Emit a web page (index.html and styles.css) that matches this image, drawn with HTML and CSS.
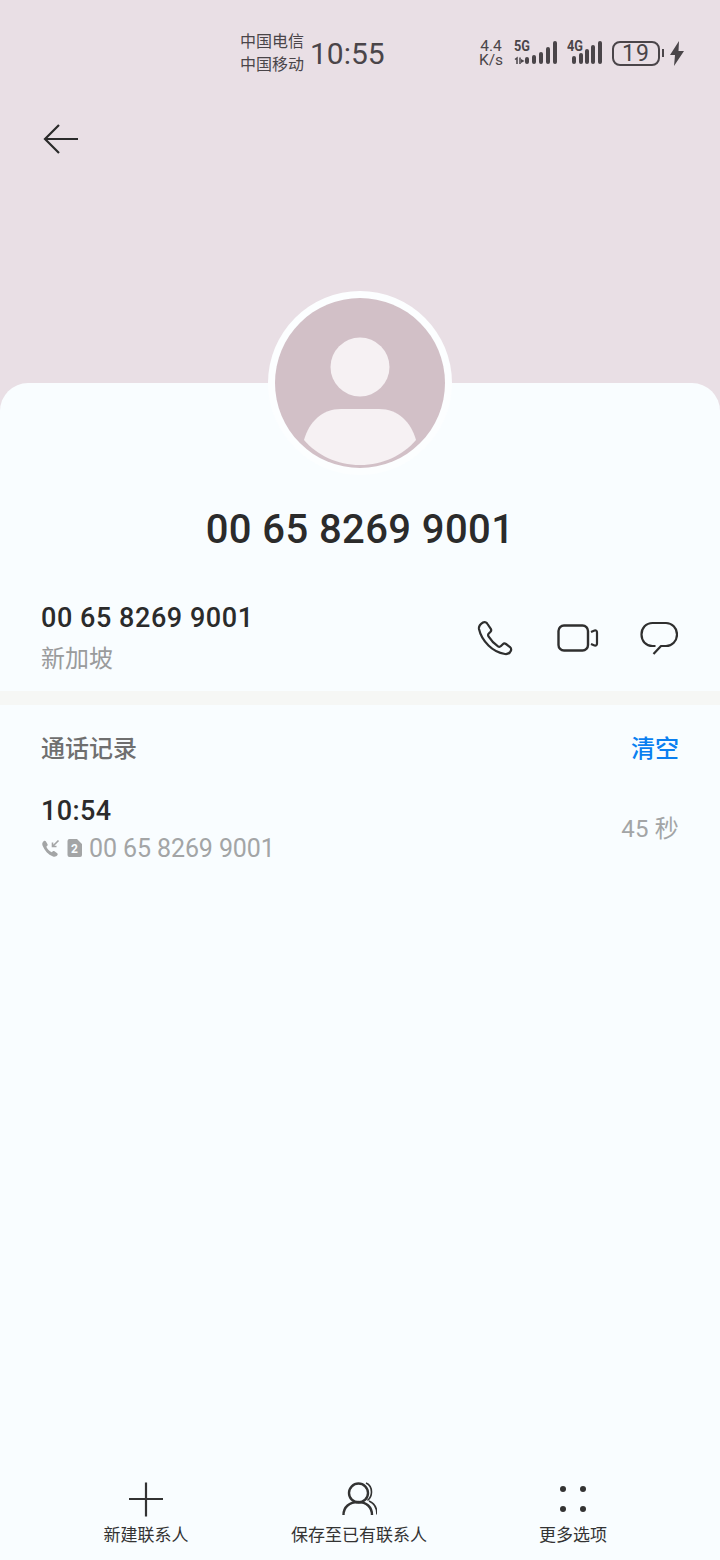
FILE: index.html
```html
<!DOCTYPE html>
<html lang="zh-CN">
<head>
  <meta charset="UTF-8" />
  <meta name="viewport" content="width=device-width, initial-scale=1.0"/>
  <title>通话详情</title>
  <link rel="stylesheet" href="styles.css">
</head>
<body>
  <header class="top">
    <div class="status">
      <div class="carriers">
        <span>中国电信</span>
        <span>中国移动</span>
      </div>
      <div class="clock">10:55</div>
      <div class="speed">
        <span>4.4</span>
        <span>K/s</span>
      </div>
      <div class="signal">
        <span class="net">5G</span>
        <svg class="bars" width="44" height="24" viewBox="0 0 44 24">
          <path d="M1 19.500l2-1.500v6M6 17.500v6.500" fill="none" stroke="#4a4549" stroke-width="1.500"/>
          <path d="M7 19l3.500 2-3.500 2z" fill="#4a4549"/>
          <rect x="11" y="17" width="4" height="7" rx="2" fill="#4a4549"/>
          <rect x="18" y="15" width="4" height="9" rx="2" fill="#4a4549"/>
          <rect x="25" y="12" width="4" height="12" rx="2" fill="#4a4549"/>
          <rect x="32" y="7" width="4" height="17" rx="2" fill="#4a4549"/>
          <rect x="39" y="1" width="4" height="23" rx="2" fill="#4a4549"/>
        </svg>
      </div>
      <div class="signal signal-4g">
        <span class="net">4G</span>
        <svg class="bars" width="36" height="24" viewBox="0 0 36 24">
          <rect x="5" y="16" width="4" height="8" rx="2" fill="#4a4549"/>
          <rect x="12" y="13" width="4" height="11" rx="2" fill="#4a4549"/>
          <rect x="18" y="9" width="4" height="15" rx="2" fill="#4a4549"/>
          <rect x="24" y="5" width="4" height="19" rx="2" fill="#4a4549"/>
          <rect x="31" y="1" width="4" height="23" rx="2" fill="#4a4549"/>
        </svg>
      </div>
      <div class="battery">19</div>
      <div class="battery-tip"></div>
      <svg class="bolt" width="14" height="25" viewBox="0 0 14 25">
        <path d="M9 0L0 14h5l-1 11 10-15H8.500z" fill="#4a4549"/>
      </svg>
    </div>
    <button class="back">
      <svg width="36" height="32" viewBox="0 0 36 32">
        <path d="M35 16H2M16 2L2 16l14 14" fill="none" stroke="#2b2b2b" stroke-width="2.200"/>
      </svg>
    </button>
  </header>

  <main class="card">
    <div class="avatar">
      <svg width="170" height="170" viewBox="0 0 170 170">
        <circle cx="85" cy="85" r="85" fill="#d2c0c7"/>
        <circle cx="85" cy="69" r="29.500" fill="#f6f1f3"/>
        <path d="M29 142C34 124 47 111 66 111h38c19 0 32 13 37 31-13 15-33 25-56 25s-43-10-56-25z" fill="#f6f1f3"/>
      </svg>
    </div>

    <h1 class="title">00 65 8269 9001</h1>

    <section class="number-row">
      <div>
        <div class="number">00 65 8269 9001</div>
        <div class="region">新加坡</div>
      </div>
      <div class="actions">
        <svg class="icon-phone" width="36" height="36" viewBox="0 0 36 36">
          <path d="M6 2.500C3.500 4 1.500 6 2 9c1.500 7 5 12 9.500 16.500S22 33 28 34c2.500.3 5-1 6-3.500.5-1.500 0-2.500-1-3.500l-4-3c-1-.7-2.300-.7-3.200.2l-1.800 1.800c-1 1-2 1-3 .3-4-2.800-7-6-9.500-10-.6-1-.5-2 .3-2.800l1.700-1.700c.8-.9.9-2 .3-3L10.500 4C9.500 2.300 7.500 1.600 6 2.500z" fill="none" stroke="#2f2f2f" stroke-width="2.200"/>
        </svg>
        <svg class="icon-video" width="42" height="28" viewBox="0 0 42 28">
          <rect x="1.500" y="1.500" width="29.500" height="25" rx="5.500" fill="none" stroke="#2f2f2f" stroke-width="2.400"/>
          <path d="M34 8l3.500-1.500Q40 6 40 8.500v11q0 2.500-2.500 2L34 20" fill="none" stroke="#2f2f2f" stroke-width="2.200"/>
        </svg>
        <svg class="icon-chat" width="38" height="34" viewBox="0 0 38 34">
          <path d="M15.500 25h-3C6 25 1.500 20 1.500 13.500S6 2 12.500 2H26c6 0 11 5 11 11.500S32 25 26 25h-5l-7.500 8" fill="none" stroke="#2f2f2f" stroke-width="2.200" stroke-linejoin="round"/>
        </svg>
      </div>
    </section>

    <div class="divider"></div>

    <section class="log">
      <div class="log-head">
        <span class="log-title">通话记录</span>
        <span class="log-clear">清空</span>
      </div>
      <div class="log-item">
        <div>
          <div class="log-time">10:54</div>
          <div class="log-sub">
            <svg width="19" height="19" viewBox="0 0 19 19">
              <path d="M3 2C1.500 3 .8 4.500 1.500 6.500c2 5 5.500 9 10.500 11 1.800.6 3.500 0 4.500-1.500.4-.7.300-1.300-.3-1.800l-2.700-2c-.6-.4-1.200-.4-1.700.1l-1 1c-2.500-1.200-4.300-3-5.500-5.500l1-1c.5-.5.5-1.200.1-1.700L4.800 2.300C4.300 1.700 3.600 1.600 3 2z" fill="#a3a5a6"/>
              <path d="M17.500 1.500L11.500 7.500M11.500 3.500v4h4" fill="none" stroke="#a3a5a6" stroke-width="1.600"/>
            </svg>
            <svg class="sim" width="15" height="18" viewBox="0 0 15 18">
              <path d="M2.500 0H10l5 5v11a2 2 0 0 1-2 2H2.500a2 2 0 0 1-2-2V2a2 2 0 0 1 2-2z" fill="#a3a5a6"/>
              <text x="7.500" y="14" text-anchor="middle" class="sim-num">2</text>
            </svg>
            <span class="log-number">00 65 8269 9001</span>
          </div>
        </div>
        <div class="log-duration">45 秒</div>
      </div>
    </section>

    <nav class="bottom">
      <div class="tool">
        <svg width="36" height="36" viewBox="0 0 36 36">
          <path d="M1 18h34M18 1.500v34" fill="none" stroke="#333" stroke-width="2.200"/>
        </svg>
        <span>新建联系人</span>
      </div>
      <div class="tool">
        <svg width="36" height="36" viewBox="0 0 36 36">
          <circle cx="17.500" cy="12" r="9.500" fill="none" stroke="#333" stroke-width="2.400"/>
          <path d="M2.500 34c0-8 6-13 14.500-13s14 5 14 13" fill="none" stroke="#333" stroke-width="2.400"/>
          <path d="M25 2c3.500 1.500 5.500 5 5.500 9s-1.500 6.500-4 8.500M28 20c5 2 8 7 8 13.500" fill="none" stroke="#333" stroke-width="1.600"/>
        </svg>
        <span>保存至已有联系人</span>
      </div>
      <div class="tool">
        <svg width="36" height="36" viewBox="0 0 36 36">
          <circle cx="8" cy="8" r="3" fill="#333"/>
          <circle cx="28" cy="8" r="3" fill="#333"/>
          <circle cx="8" cy="28" r="3" fill="#333"/>
          <circle cx="28" cy="28" r="3" fill="#333"/>
        </svg>
        <span>更多选项</span>
      </div>
    </nav>
  </main>
</body>
</html>
```

FILE: styles.css
```css
* {
  box-sizing: border-box;
}

body {
  margin: 0;
  height: 1560px;
  display: flex;
  flex-direction: column;
  overflow: hidden;
  background: #e9dfe5;
  color: #2b2b2b;
  font-family: 'Roboto', 'Noto Sans CJK SC', sans-serif;
}

.top {
  height: 383px;
  padding-top: 28px;
}

.status {
  display: flex;
  align-items: center;
  height: 50px;
  padding-left: 240px;
  color: #4a4549;
}

.carriers {
  display: flex;
  flex-direction: column;
  font-size: 16px;
  line-height: 23px;
  width: 70px;
}

.clock {
  font-size: 30px;
  width: 168px;
}

.speed {
  display: flex;
  flex-direction: column;
  align-items: center;
  width: 26px;
  font-size: 15.5px;
  line-height: 14px;
  margin-right: 10px;
}

.signal {
  position: relative;
  width: 44px;
  height: 26px;
}

.signal-4g {
  width: 36px;
  margin-left: 9px;
}

.net {
  position: absolute;
  left: 0;
  top: -1px;
  font-size: 15px;
  font-weight: 700;
  line-height: 14px;
  transform: scaleX(0.85);
  transform-origin: left;
}

.bars {
  display: block;
}

.battery {
  width: 48px;
  height: 25px;
  margin-left: 9px;
  border: 2px solid #4a4549;
  border-radius: 8px;
  font-size: 23px;
  letter-spacing: 1px;
  line-height: 21px;
  text-align: center;
}

.battery-tip {
  width: 2px;
  height: 8px;
  margin-left: 2px;
  background: #4a4549;
}

.bolt {
  margin-left: 6px;
}

.back {
  display: block;
  margin: 45px 0 0 43px;
  padding: 0;
  border: none;
  background: none;
  line-height: 0;
}

.card {
  flex: 1;
  display: flex;
  flex-direction: column;
  background: #f9fdff;
  border-radius: 28px 28px 0 0;
}

.avatar {
  align-self: center;
  margin-top: -92px;
  padding: 7px;
  background: #fcfeff;
  border-radius: 50%;
  line-height: 0;
}

.title {
  margin: 27px 0 0;
  text-align: center;
  font-size: 40px;
  font-weight: 500;
  letter-spacing: 0.4px;
  line-height: 56px;
}

.number-row {
  display: flex;
  justify-content: space-between;
  align-items: center;
  height: 91px;
  margin-top: 35px;
  padding: 0 41px;
}

.number {
  font-size: 27px;
  font-weight: 500;
  letter-spacing: 0.55px;
  line-height: 38px;
}

.region {
  margin-top: 2px;
  font-size: 24px;
  line-height: 40px;
  color: #9a9b9c;
}

.actions {
  display: flex;
  align-items: center;
  margin: -2px 1px 0 0;
}

.icon-video {
  margin-left: 44px;
}

.icon-chat {
  margin-left: 41px;
}

.divider {
  height: 14px;
  margin-top: 7px;
  background: #f6f7f5;
}

.log {
  padding: 0 41px;
}

.log-head {
  display: flex;
  justify-content: space-between;
  align-items: center;
  height: 83px;
  margin-bottom: 6px;
}

.log-title {
  font-size: 24px;
  font-weight: 500;
  color: #6f6f6f;
}

.log-clear {
  font-size: 24px;
  font-weight: 500;
  color: #0a7ff0;
}

.log-item {
  display: flex;
  justify-content: space-between;
  align-items: center;
}

.log-time {
  font-size: 27px;
  font-weight: 500;
  letter-spacing: 0.4px;
  line-height: 34px;
}

.log-sub {
  display: flex;
  align-items: center;
  height: 40px;
  color: #a3a5a6;
}

.sim {
  margin-left: 7px;
}

.sim-num {
  font-size: 12px;
  font-weight: 700;
  fill: #f9fdff;
}

.log-number {
  margin-left: 7px;
  font-size: 25px;
  letter-spacing: -0.1px;
}

.log-duration {
  padding-bottom: 10px;
  font-size: 24px;
  letter-spacing: 0.2px;
  color: #a3a5a6;
}

.bottom {
  display: grid;
  grid-template-columns: 292px 134px 1fr;
  margin-top: auto;
  height: 79px;
}

.tool {
  display: flex;
  flex-direction: column;
  align-items: center;
  font-size: 17px;
  line-height: 24px;
  color: #333;
}

.tool span {
  white-space: nowrap;
  margin-top: 6px;
}

.tool svg {
  display: block;
}
```
